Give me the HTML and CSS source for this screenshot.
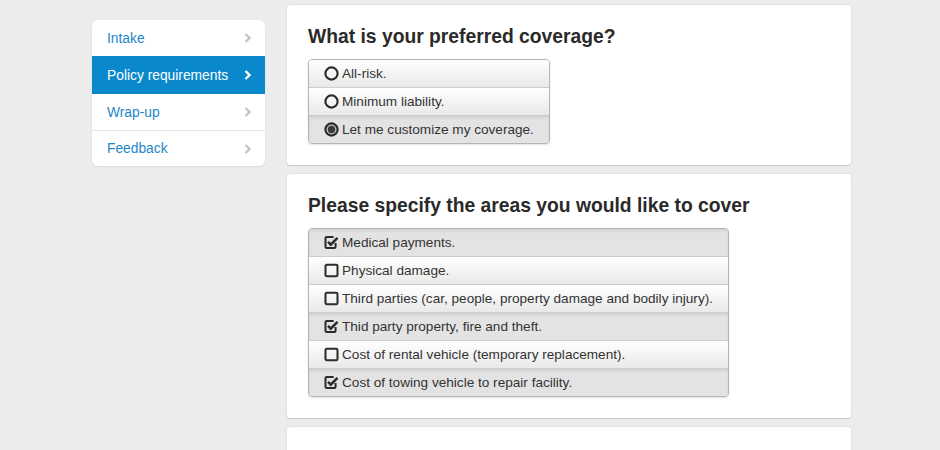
FILE: index.html
```html
<!DOCTYPE html>
<html>
<head>
<meta charset="utf-8">
<link rel="stylesheet" href="styles.css">
</head>
<body>
<div class="page">
  <nav class="sidenav">
    <a class="nav-item" href="#">Intake<svg class="chev" viewBox="0 0 8 10"><path d="M1.5 1 L5.5 5 L1.5 9" fill="none" stroke="currentColor" stroke-width="2.4" stroke-linejoin="miter"/></svg></a>
    <a class="nav-item active" href="#">Policy requirements<svg class="chev" viewBox="0 0 8 10"><path d="M1.5 1 L5.5 5 L1.5 9" fill="none" stroke="currentColor" stroke-width="2.4" stroke-linejoin="miter"/></svg></a>
    <a class="nav-item" href="#">Wrap-up<svg class="chev" viewBox="0 0 8 10"><path d="M1.5 1 L5.5 5 L1.5 9" fill="none" stroke="currentColor" stroke-width="2.4" stroke-linejoin="miter"/></svg></a>
    <a class="nav-item" href="#">Feedback<svg class="chev" viewBox="0 0 8 10"><path d="M1.5 1 L5.5 5 L1.5 9" fill="none" stroke="currentColor" stroke-width="2.4" stroke-linejoin="miter"/></svg></a>
  </nav>
  <main class="main">
    <section class="card">
      <h2 class="q">What is your preferred coverage?</h2>
      <div class="group">
        <label class="opt"><svg class="ico" viewBox="0 0 14 14"><circle cx="7" cy="7" r="5.7" fill="none" stroke="#2b2b2b" stroke-width="2"/></svg>All-risk.</label>
        <label class="opt"><svg class="ico" viewBox="0 0 14 14"><circle cx="7" cy="7" r="5.7" fill="none" stroke="#2b2b2b" stroke-width="2"/></svg>Minimum liability.</label>
        <label class="opt on"><svg class="ico" viewBox="0 0 14 14"><circle cx="7" cy="7" r="5.7" fill="#bdbdbd" stroke="#2b2b2b" stroke-width="2"/><circle cx="7" cy="7" r="3.4" fill="#3a3a3a"/></svg>Let me customize my coverage.</label>
      </div>
    </section>
    <section class="card">
      <h2 class="q">Please specify the areas you would like to cover</h2>
      <div class="group">
        <label class="opt on"><svg class="ico" viewBox="0 0 14 14"><path d="M10.8 7.5 V11 a1.2 1.2 0 0 1 -1.2 1.2 H2.6 a1.2 1.2 0 0 1 -1.2 -1.2 V3 a1.2 1.2 0 0 1 1.2 -1.2 H9" fill="none" stroke="#2b2b2b" stroke-width="1.9"/><path d="M3.8 6.5 L6.3 9 L12.6 2.7" fill="none" stroke="#2b2b2b" stroke-width="2.4"/></svg>Medical payments.</label>
        <label class="opt"><svg class="ico" viewBox="0 0 14 14"><rect x="1.4" y="1.6" width="11.2" height="10.8" rx="1.3" fill="none" stroke="#2b2b2b" stroke-width="1.9"/></svg>Physical damage.</label>
        <label class="opt"><svg class="ico" viewBox="0 0 14 14"><rect x="1.4" y="1.6" width="11.2" height="10.8" rx="1.3" fill="none" stroke="#2b2b2b" stroke-width="1.9"/></svg>Third parties (car, people, property damage and bodily injury).</label>
        <label class="opt on"><svg class="ico" viewBox="0 0 14 14"><path d="M10.8 7.5 V11 a1.2 1.2 0 0 1 -1.2 1.2 H2.6 a1.2 1.2 0 0 1 -1.2 -1.2 V3 a1.2 1.2 0 0 1 1.2 -1.2 H9" fill="none" stroke="#2b2b2b" stroke-width="1.9"/><path d="M3.8 6.5 L6.3 9 L12.6 2.7" fill="none" stroke="#2b2b2b" stroke-width="2.4"/></svg>Thid party property, fire and theft.</label>
        <label class="opt"><svg class="ico" viewBox="0 0 14 14"><rect x="1.4" y="1.6" width="11.2" height="10.8" rx="1.3" fill="none" stroke="#2b2b2b" stroke-width="1.9"/></svg>Cost of rental vehicle (temporary replacement).</label>
        <label class="opt on"><svg class="ico" viewBox="0 0 14 14"><path d="M10.8 7.5 V11 a1.2 1.2 0 0 1 -1.2 1.2 H2.6 a1.2 1.2 0 0 1 -1.2 -1.2 V3 a1.2 1.2 0 0 1 1.2 -1.2 H9" fill="none" stroke="#2b2b2b" stroke-width="1.9"/><path d="M3.8 6.5 L6.3 9 L12.6 2.7" fill="none" stroke="#2b2b2b" stroke-width="2.4"/></svg>Cost of towing vehicle to repair facility.</label>
      </div>
    </section>
    <section class="card card-empty"></section>
  </main>
</div>
</body>
</html>
```

FILE: styles.css
```css
html, body {
  margin: 0;
  padding: 0;
}
body {
  background: #ececec;
  font-family: "Liberation Sans", Arial, sans-serif;
  color: #333;
  overflow: hidden;
  height: 450px;
}
.page {
  display: flex;
  align-items: flex-start;
  gap: 22px;
  padding: 5px 0 0 92px;
}
.sidenav {
  margin-top: 15px;
  width: 173px;
  background: #fff;
  border-radius: 6px;
  box-shadow: 0 1px 2px rgba(0,0,0,0.08);
  display: flex;
  flex-direction: column;
  overflow: hidden;
}
.nav-item {
  box-sizing: border-box;
  display: flex;
  align-items: center;
  justify-content: space-between;
  height: 36px;
  padding: 0 13px 0 15px;
  font-size: 13.8px;
  color: #1e87c8;
  text-decoration: none;
  border-top: 1px solid #e5e5e5;
}
.nav-item:first-child {
  border-top: none;
}
.nav-item .chev {
  width: 8px;
  height: 10px;
  color: #c4c4c4;
}
.nav-item.active {
  background: #0a88cc;
  color: #fff;
  border-top-color: #0a88cc;
  height: 37px;
}
.nav-item.active .chev {
  color: #fff;
}
.nav-item.active + .nav-item {
  border-top-color: #0a88cc;
  height: 37px;
}
.main {
  width: 564px;
  display: flex;
  flex-direction: column;
  gap: 9px;
}
.card {
  background: #fff;
  border-radius: 3px;
  box-shadow: 0 1px 1px rgba(0,0,0,0.12), 0 0 0 1px rgba(0,0,0,0.03);
  padding: 21px 21px 21px;
  display: flex;
  flex-direction: column;
  align-items: flex-start;
}
.card-empty {
  height: 60px;
}
.q {
  margin: 0 0 11px;
  font-size: 19.3px;
  line-height: 22px;
  font-weight: bold;
  color: #2a2a2a;
}
.group {
  display: flex;
  flex-direction: column;
  border: 1px solid #b5b5b5;
  border-radius: 4px;
  overflow: hidden;
  box-shadow: 0 1px 2px rgba(0,0,0,0.12);
}
.opt {
  display: flex;
  align-items: center;
  gap: 3px;
  height: 27px;
  padding: 0 15px 0 15px;
  font-size: 13.6px;
  color: #333;
  background: linear-gradient(#ffffff, #e9e9e9);
  border-top: 1px solid #cdcdcd;
  white-space: nowrap;
}
.opt:first-child {
  border-top: none;
}
.opt.on {
  background: #e3e3e3;
  box-shadow: inset 0 2px 3px rgba(0,0,0,0.08);
}
.ico {
  width: 15px;
  height: 15px;
  flex: none;
}
```
